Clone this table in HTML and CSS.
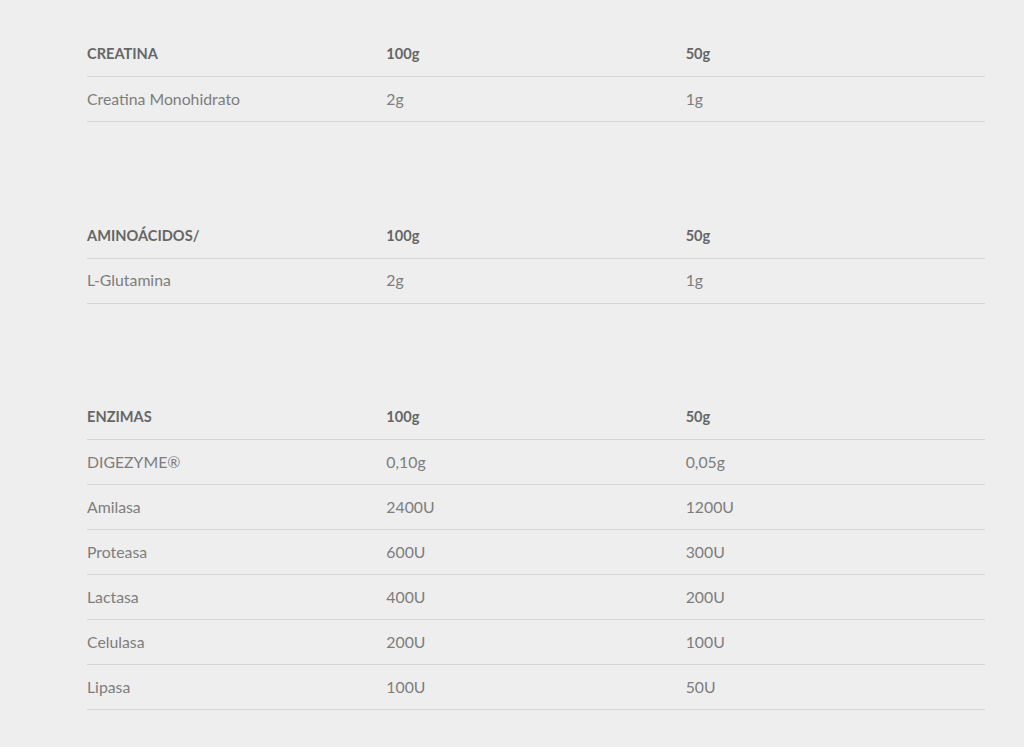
FILE: index.html
```html
<!DOCTYPE html>
<html lang="es">
<head>
<meta charset="utf-8">
<link rel="stylesheet" href="styles.css">
</head>
<body>
<main class="page">
  <table class="nutri">
    <thead><tr><th>CREATINA</th><th>100g</th><th>50g</th></tr></thead>
    <tbody>
      <tr><td>Creatina Monohidrato</td><td>2g</td><td>1g</td></tr>
    </tbody>
  </table>
  <table class="nutri">
    <thead><tr><th>AMINOÁCIDOS/</th><th>100g</th><th>50g</th></tr></thead>
    <tbody>
      <tr><td>L-Glutamina</td><td>2g</td><td>1g</td></tr>
    </tbody>
  </table>
  <table class="nutri">
    <thead><tr><th>ENZIMAS</th><th>100g</th><th>50g</th></tr></thead>
    <tbody>
      <tr><td>DIGEZYME®</td><td>0,10g</td><td>0,05g</td></tr>
      <tr><td>Amilasa</td><td>2400U</td><td>1200U</td></tr>
      <tr><td>Proteasa</td><td>600U</td><td>300U</td></tr>
      <tr><td>Lactasa</td><td>400U</td><td>200U</td></tr>
      <tr><td>Celulasa</td><td>200U</td><td>100U</td></tr>
      <tr><td>Lipasa</td><td>100U</td><td>50U</td></tr>
    </tbody>
  </table>
</main>
</body>
</html>
```
FILE: styles.css
```css
html, body {
  margin: 0;
  padding: 0;
  background: #eeeeee;
}
body {
  font-family: Lato, "Liberation Sans", sans-serif;
  font-size: 15.8px;
  color: #7d7d7d;
}
.page {
  padding: 32px 39px 0 87px;
  display: flex;
  flex-direction: column;
  gap: 91.5px;
}
.nutri {
  width: 898px;
  border-collapse: collapse;
  table-layout: fixed;
}
.nutri th, .nutri td {
  height: 42px;
  padding: 0 0 2px 0;
  text-align: left;
  vertical-align: middle;
  border-bottom: 1px solid #d6d6d6;
}
.nutri th {
  height: 43px;
  padding-bottom: 1px;
  font-weight: bold;
  font-size: 14.6px;
  color: #666666;
}
```
